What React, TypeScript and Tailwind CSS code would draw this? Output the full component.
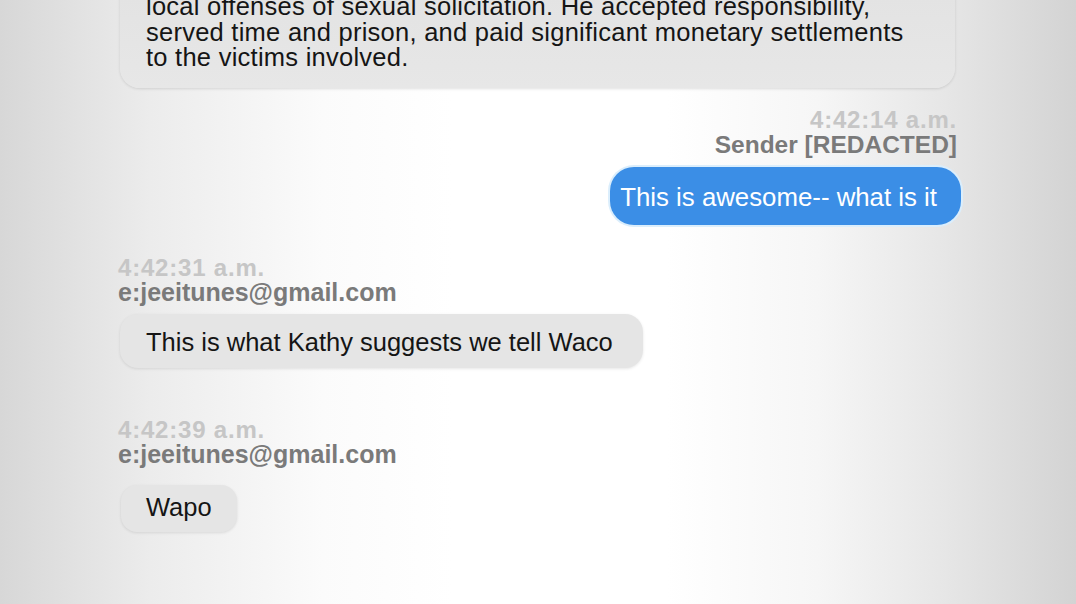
const font = "font-['Liberation_Sans',Arial,sans-serif]"

function Meta({ time, name, right }: { time: string; name: string; right?: boolean }) {
  return (
    <div className={`flex flex-col ${right ? "items-end" : "items-start"}`}>
      <div className="text-[24px] font-bold leading-[24px] tracking-[0.8px] text-[#c6c6c6]">{time}</div>
      <div className={`${right ? "text-[24.5px] leading-[26px]" : "text-[25px] leading-[25px]"} font-bold text-[#7a7a7a]`}>
        {name}
      </div>
    </div>
  )
}

export default function App() {
  return (
    <div
      className={`${font} h-[604px] w-[1076px] overflow-hidden bg-[linear-gradient(to_right,#d7d7d7,#ececec_14%,#fbfbfb_30%,#ffffff_42%,#ffffff_62%,#f6f6f6_76%,#e6e6e6_88%,#d3d3d3)]`}
    >
      <div className="flex flex-col">
        {/* earlier message, cut off at the top */}
        <div className="ml-[120px] mr-[121px] -mt-[26px] rounded-[20px] bg-[linear-gradient(to_bottom,#e2e2e2,#e7e7e7)] pl-[26px] pr-[20px] pt-[20px] pb-[17px] text-[25.5px] leading-[25.5px] tracking-[0.25px] text-[#151515] shadow-[0_1px_3px_rgba(0,0,0,0.12)]">
          local offenses of sexual solicitation. He accepted responsibility,
          <br />
          served time and prison, and paid significant monetary settlements
          <br />
          to the victims involved.
        </div>

        {/* outgoing */}
        <div className="mt-[20px] flex flex-col items-end pr-[119px]">
          <Meta time="4:42:14 a.m." name="Sender [REDACTED]" right />
          <div className="-mr-[4px] mt-[9px] rounded-[24px] bg-[#3b8ee6] pl-[10px] pr-[24px] pt-[15px] pb-[13px] text-[25.8px] leading-[30px] text-white shadow-[0_0_0_2px_#dbeefc]">
            This is awesome-- what is it
          </div>
        </div>

        {/* incoming */}
        <div className="mt-[31px] flex flex-col items-start pl-[118px]">
          <Meta time="4:42:31 a.m." name="e:jeeitunes@gmail.com" />
          <div className="ml-[2px] mt-[9px] rounded-[18px] bg-[#e5e5e5] pl-[26px] pr-[30px] pt-[13px] pb-[11px] text-[25.5px] leading-[30px] text-[#151515] shadow-[0_1px_3px_rgba(0,0,0,0.1)]">
            This is what Kathy suggests we tell Waco
          </div>
        </div>

        <div className="mt-[50px] flex flex-col items-start pl-[118px]">
          <Meta time="4:42:39 a.m." name="e:jeeitunes@gmail.com" />
          <div className="ml-[3px] mt-[18px] rounded-[16px] bg-[#e5e5e5] pl-[25px] pr-[25px] pt-[8px] pb-[10px] text-[25.5px] leading-[29px] text-[#151515] shadow-[0_1px_3px_rgba(0,0,0,0.1)]">
            Wapo
          </div>
        </div>
      </div>
    </div>
  )
}
